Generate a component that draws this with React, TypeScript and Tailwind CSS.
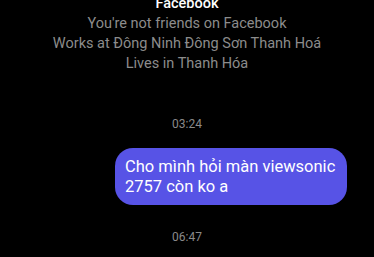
export default function App() {
  return (
    <div className="h-[257px] w-full overflow-hidden bg-black font-['Roboto',sans-serif]">
      <div className="-mt-[6px] flex flex-col items-center text-center">
        <h3 className="text-[14.5px] leading-5 font-medium text-white">Facebook</h3>
        <p className="text-[14.5px] leading-5 text-[#8c8c8c]">You're not friends on Facebook</p>
        <p className="text-[14.5px] leading-5 text-[#8c8c8c]">Works at Đông Ninh Đông Sơn Thanh Hoá</p>
        <p className="text-[14.5px] leading-5 text-[#8c8c8c]">Lives in Thanh Hóa</p>
      </div>

      <div className="mt-[42px] text-center text-[12px] leading-4 text-[#8a8a8a]">03:24</div>

      <div className="mt-[16px] flex justify-end pr-[27px]">
        <div className="w-[232px] rounded-[18px] bg-[#5753e6] pt-[9px] pb-[8px] pl-[10px] pr-[6px] text-[16.5px] leading-5 whitespace-nowrap text-white">
          Cho mình hỏi màn viewsonic
          <br />
          2757 còn ko a
        </div>
      </div>

      <div className="mt-[24px] text-center text-[12px] leading-4 text-[#8a8a8a]">06:47</div>
    </div>
  );
}
